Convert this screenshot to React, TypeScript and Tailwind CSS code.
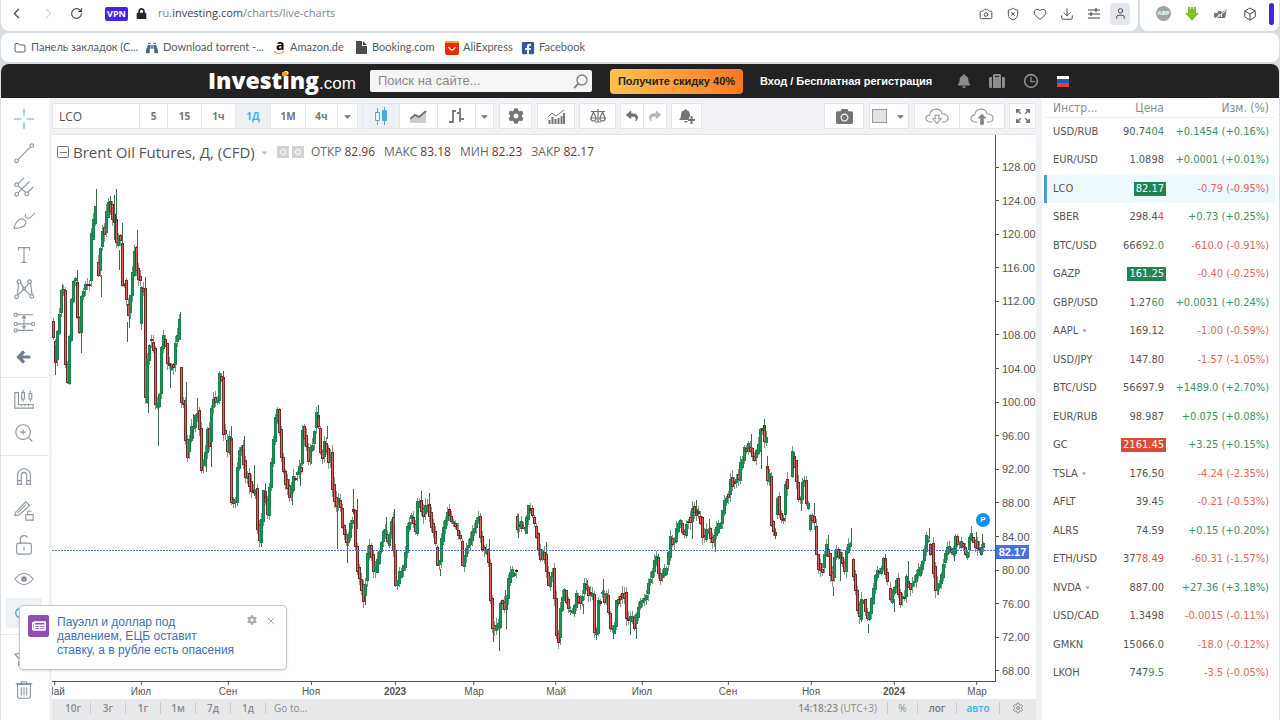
import React from 'react';
import { ChevronLeft, ChevronRight, RotateCw, Camera, ShieldX, Heart, Download, User, Box, Folder, X, Settings } from 'lucide-react';
import { FaLock, FaBell, FaSuitcase, FaCamera, FaReply, FaShare, FaCog, FaBinoculars, FaFacebookSquare, FaNewspaper, FaCaretDown } from 'react-icons/fa';

type Point = [number, number];

// Price path of the instrument, split where the session gaps
const RUNS: Point[][] = [
  [[53, 322], [55, 340], [57, 360], [59, 335], [60, 318], [62, 311], [63, 292], [65, 293], [66, 353], [68, 380], [70, 388], [71, 340], [72, 333], [73, 303], [75, 280], [77, 282], [79, 320], [81, 332], [82, 303], [84, 292], [88, 283], [91, 282], [92, 257], [93, 238], [95, 222], [96, 210]],
  [[98, 265], [101, 275], [102, 248], [103, 220], [105, 237], [107, 228], [109, 203], [110, 203], [113, 210], [114, 215], [116, 220], [118, 245], [120, 237], [122, 242], [123, 292], [125, 282], [127, 282], [128, 303], [129, 322], [131, 303], [133, 285], [134, 275], [135, 250], [137, 250], [138, 267], [140, 277]],
  [[141, 322], [142, 303], [143, 287], [145, 288], [146, 377], [147, 400], [149, 360], [151, 342], [153, 342], [155, 347], [156, 407], [158, 408], [160, 405], [161, 393], [163, 348], [165, 340], [167, 343], [170, 373], [172, 363], [175, 363], [177, 342], [179, 340], [180, 317]],
  [[181, 368], [183, 402], [185, 403], [186, 427], [188, 453], [190, 455], [192, 430], [194, 432], [197, 417], [198, 405], [200, 420], [202, 443], [203, 467], [206, 463], [208, 440], [209, 430], [211, 443], [213, 407], [216, 395], [218, 413], [221, 377], [223, 377], [224, 417], [225, 432]],
  [[227, 442], [228, 467], [230, 440], [232, 440], [233, 502], [237, 503], [238, 480], [241, 450], [244, 448], [246, 478], [250, 473], [252, 495], [258, 490], [259, 527], [261, 545], [263, 520], [265, 493], [267, 502], [269, 515], [272, 477], [274, 453], [277, 420], [279, 412], [281, 433], [283, 460], [287, 482], [292, 497], [294, 483], [297, 477], [301, 470]],
  [[302, 462], [304, 428], [307, 443], [311, 463], [313, 440], [315, 447], [317, 413], [319, 417], [321, 440], [323, 463], [327, 437], [329, 462], [332, 453], [334, 487], [337, 507], [341, 498], [343, 523], [347, 540], [349, 548], [350, 537], [352, 523]],
  [[353, 512], [356, 513], [357, 547], [359, 570], [363, 588], [365, 598], [367, 583], [369, 557], [372, 543], [374, 567], [377, 573], [380, 560], [383, 543], [386, 528], [390, 550], [392, 520], [394, 520], [396, 587], [399, 583], [403, 570], [406, 567], [408, 537], [410, 523], [413, 517], [417, 533], [419, 507], [422, 500], [424, 517], [429, 505], [432, 522], [436, 540], [440, 572], [442, 547], [445, 527], [449, 513], [453, 523], [457, 527]],
  [[458, 532], [462, 543], [464, 565], [467, 550], [471, 542], [475, 530], [480, 517], [482, 540], [486, 553], [489, 550], [491, 577], [493, 623], [497, 630], [500, 627], [502, 602], [507, 610], [509, 583], [512, 577], [516, 572]],
  [[517, 520], [518, 528], [523, 527], [527, 533], [528, 523], [531, 508], [535, 517], [539, 537], [542, 560], [546, 550], [548, 563], [550, 588], [555, 570], [557, 600], [559, 633], [562, 642], [563, 613], [567, 592], [570, 607], [574, 617], [577, 607], [579, 597], [583, 603], [588, 583], [592, 597], [596, 593], [597, 633], [599, 635], [601, 603]],
  [[603, 592], [607, 600], [609, 597], [611, 613], [614, 637], [617, 627], [619, 603], [623, 597], [628, 595], [629, 618], [635, 620], [636, 633], [638, 620], [643, 603], [648, 597], [652, 582], [656, 567], [659, 557], [662, 582], [667, 573], [670, 563], [673, 540], [677, 543], [680, 527], [684, 522], [686, 543], [690, 517], [693, 523], [695, 507], [698, 513], [703, 520], [706, 542], [710, 530], [716, 543], [718, 533], [722, 527], [725, 513], [728, 497], [731, 495], [732, 478], [736, 487], [738, 478], [741, 480], [742, 468], [746, 460], [747, 450], [752, 447], [755, 460], [759, 455], [761, 450], [763, 430], [765, 428], [767, 443]],
  [[768, 467], [770, 480], [772, 478], [773, 520], [776, 535]],
  [[778, 515], [780, 500], [783, 523], [786, 517], [787, 478], [789, 488]],
  [[793, 475], [795, 457], [798, 467], [800, 500], [803, 500], [804, 483], [807, 483], [809, 507]],
  [[811, 528], [814, 512], [817, 527], [819, 555], [822, 573], [826, 570], [828, 547], [832, 557], [834, 590], [837, 560], [838, 550], [842, 557], [847, 570], [850, 547], [852, 545]],
  [[854, 563], [857, 583], [859, 600], [862, 620], [863, 607], [867, 600], [869, 627], [872, 613], [875, 597], [877, 583], [879, 573], [883, 577], [886, 560], [889, 583]],
  [[891, 590], [893, 603], [897, 587], [899, 582], [902, 602], [907, 597], [908, 580], [913, 587], [916, 582], [919, 577], [922, 572], [925, 563], [927, 550], [930, 535], [932, 553]],
  [[934, 547], [936, 570], [938, 590], [943, 583], [945, 570], [948, 553], [952, 550], [955, 557], [958, 540], [962, 548], [964, 543], [968, 557], [971, 547], [973, 538], [977, 543], [982, 553], [985, 546]],
];

// Long shadows: x, top, bottom
const WICKS: [number, number, number][] = [
  [55, 345, 375], [62, 284, 312], [77, 270, 285], [81, 330, 353], [96, 189, 212], [101, 275, 297], [110, 196, 205], [116, 189, 222], [114, 195, 240], [119, 250, 270], [122, 223, 245],
  [127, 322, 342], [137, 230, 252], [129, 300, 328], [145, 277, 290], [148, 395, 414], [158, 405, 447], [170, 370, 388], [180, 312, 320], [186, 382, 405], [193, 415, 440], [197, 398, 410],
  [206, 460, 473], [211, 430, 468], [223, 371, 380], [231, 427, 442], [244, 437, 450], [254, 466, 497], [261, 540, 548], [265, 484, 500], [292, 490, 506], [300, 464, 487], [318, 405, 420],
  [311, 455, 465], [327, 427, 440], [337, 505, 550], [347, 535, 564], [353, 490, 515], [357, 500, 530], [365, 595, 606], [386, 518, 530], [394, 510, 525], [421, 492, 503], [429, 494, 508],
  [440, 570, 577], [449, 511, 516], [465, 560, 567], [489, 540, 553], [493, 620, 643], [499, 627, 652], [506, 608, 630], [505, 591, 602], [518, 515, 539], [547, 543, 556], [561, 640, 643],
  [584, 605, 615], [588, 581, 590], [597, 630, 641], [604, 580, 600], [614, 630, 640], [631, 618, 636], [637, 628, 640], [659, 555, 560], [693, 515, 540], [697, 501, 515], [710, 520, 534],
  [716, 540, 553], [752, 435, 450], [765, 420, 432], [762, 445, 470], [768, 457, 470], [776, 530, 540], [795, 453, 460], [802, 495, 512], [815, 504, 515], [829, 536, 550], [834, 588, 597],
  [841, 555, 582], [852, 529, 547], [862, 615, 623], [869, 625, 634], [886, 555, 562], [895, 600, 613], [909, 562, 585], [930, 529, 540], [939, 588, 596], [955, 555, 562], [977, 533, 545], [983, 535, 553],
];

const noise = (n: number) => {
  const v = Math.sin(n * 12.9898) * 43758.5453;
  return v - Math.floor(v);
};

const priceAt = (run: Point[], x: number) => {
  for (let i = 1; i < run.length; i++) {
    const [x0, y0] = run[i - 1];
    const [x1, y1] = run[i];
    if (x <= x1) return y0 + ((y1 - y0) * (x - x0)) / (x1 - x0);
  }
  return run[run.length - 1][1];
};

const CANDLES = RUNS.flatMap((run) => {
  const out: { x: number; top: number; bottom: number; high: number; low: number; up: boolean }[] = [];
  const end = run[run.length - 1][0];
  for (let x = run[0][0]; x < end + 1; x += 2) {
    const open = priceAt(run, x) + (noise(x) - 0.5) * 5;
    const close = priceAt(run, Math.min(x + 2, end)) + (noise(x + 7) - 0.5) * 8;
    const top = Math.round(Math.min(open, close)) - 1;
    const bottom = Math.round(Math.max(open, close)) + 1;
    out.push({
      x,
      top,
      bottom,
      high: top - Math.round(noise(x + 3) * 7),
      low: bottom + Math.round(noise(x + 5) * 7),
      up: close < open,
    });
  }
  return out;
});

const PRICES = Array.from({ length: 16 }, (_, i) => (128 - i * 4).toFixed(2));

const MONTHS: [string, number][] = [
  ['Май', 55], ['Июл', 141], ['Сен', 228], ['Ноя', 311], ['2023', 395], ['Мар', 474],
  ['Май', 556], ['Июл', 642], ['Сен', 728], ['Ноя', 811], ['2024', 894], ['Мар', 977],
];

interface Quote {
  name: string;
  price: string;
  tail?: string;
  tone?: 'up' | 'down';
  filled?: boolean;
  change: string;
  dot?: boolean;
}

const QUOTES: Quote[] = [
  { name: 'USD/RUB', price: '90.7', tail: '404', tone: 'up', change: '+0.1454 (+0.16%)' },
  { name: 'EUR/USD', price: '1.0898', change: '+0.0001 (+0.01%)' },
  { name: 'LCO', price: '82.17', tone: 'up', filled: true, change: '-0.79 (-0.95%)' },
  { name: 'SBER', price: '298.4', tail: '4', tone: 'down', change: '+0.73 (+0.25%)' },
  { name: 'BTC/USD', price: '666', tail: '92.0', tone: 'up', change: '-610.0 (-0.91%)' },
  { name: 'GAZP', price: '161.25', tone: 'up', filled: true, change: '-0.40 (-0.25%)' },
  { name: 'GBP/USD', price: '1.27', tail: '60', tone: 'up', change: '+0.0031 (+0.24%)' },
  { name: 'AAPL', price: '169.12', change: '-1.00 (-0.59%)', dot: true },
  { name: 'USD/JPY', price: '147.80', change: '-1.57 (-1.05%)' },
  { name: 'BTC/USD', price: '56697.9', change: '+1489.0 (+2.70%)' },
  { name: 'EUR/RUB', price: '98.987', change: '+0.075 (+0.08%)' },
  { name: 'GC', price: '2161.45', tone: 'down', filled: true, change: '+3.25 (+0.15%)' },
  { name: 'TSLA', price: '176.50', change: '-4.24 (-2.35%)', dot: true },
  { name: 'AFLT', price: '39.4', tail: '5', tone: 'up', change: '-0.21 (-0.53%)' },
  { name: 'ALRS', price: '74.59', change: '+0.15 (+0.20%)' },
  { name: 'ETH/USD', price: '37', tail: '78.49', tone: 'down', change: '-60.31 (-1.57%)' },
  { name: 'NVDA', price: '887.00', change: '+27.36 (+3.18%)', dot: true },
  { name: 'USD/CAD', price: '1.3498', change: '-0.0015 (-0.11%)' },
  { name: 'GMKN', price: '15066.0', change: '-18.0 (-0.12%)' },
  { name: 'LKOH', price: '747', tail: '9.5', tone: 'up', change: '-3.5 (-0.05%)' },
];

const Icon = ({ children, size = 24 }: { children: React.ReactNode; size?: number }) => (
  <svg width={size} height={size} viewBox="0 0 24 24" fill="none" stroke="currentColor" strokeWidth="1.2" aria-hidden="true">
    {children}
  </svg>
);

const BrowserBar = () => (
  <div className="flex gap-[2px] h-[31px] text-[#3d444d]">
    <div className="flex flex-1 items-center bg-white rounded-b-lg pl-[5px] pr-2 pb-1">
      <button aria-label="Назад" className="w-5 flex justify-center"><ChevronLeft size={17} strokeWidth={1.5} /></button>
      <button aria-label="Вперёд" className="w-5 ml-3 flex justify-center text-gray-300"><ChevronRight size={17} strokeWidth={1.5} /></button>
      <button aria-label="Обновить" className="w-5 ml-2 flex justify-center"><RotateCw size={13} strokeWidth={2} /></button>
      <span className="ml-[19px] w-[23px] rounded-[2px] bg-[#4423e8] text-white text-[9px] leading-[14px] font-bold text-center">VPN</span>
      <FaLock size={11} className="ml-2 text-[#20262e]" />
      <span className="ml-[11px] text-[11px] text-[#7d858f]">ru.<span className="text-[#3a4048]">investing.com</span>/charts/live-charts</span>
      <div className="ml-auto flex items-center">
        {[Camera, ShieldX, Heart, Download].map((Glyph, i) => (
          <button key={i} aria-label="Инструмент" className="w-[27px] flex justify-center"><Glyph size={14} strokeWidth={1.6} /></button>
        ))}
        <button aria-label="Меню" className="w-[27px] flex justify-center">
          <svg width="12" height="12" viewBox="0 0 12 12" fill="none" stroke="currentColor" strokeWidth="1.200"><path d="M0 2h12M0 6h12M0 10h12M8 0v4M3 4v4" /></svg>
        </button>
        <button aria-label="Профиль" className="w-5 h-[22px] ml-[3px] rounded bg-[#e3e7ec] flex items-center justify-center"><User size={13} strokeWidth={1.8} /></button>
      </div>
    </div>
    <div className="flex items-center gap-[14px] bg-white rounded-b-lg pl-4 pr-[5px] pb-1">
      <span className="w-[15px] h-[15px] rounded-full bg-[#a2a2a2] text-white text-[6px] leading-[15px] text-center font-bold">ABP</span>
      <svg width="14" height="15" viewBox="0 0 14 15" fill="#7fc01e"><path d="M3 1h2v2h1V1h2v2h1V1h2v6h3l-7 7.500L0 7h3z" /></svg>
      <svg width="16" height="12" viewBox="0 0 16 12" fill="#777"><path d="M1 9Q0 4 4 5Q6 1 9 4L14 1L12 10H3z" /><path d="M3 10L15 1M6 6v3M8.500 6v3" stroke="#fff" strokeWidth="1" /></svg>
      <Box size={14} strokeWidth={1.7} />
      <span className="w-[5px] h-[22px] rounded bg-[#4423e8] ml-[-2px]" />
    </div>
  </div>
);

const Bookmarks = () => (
  <nav className="mt-[2px] h-[29px] bg-white rounded-lg flex items-center pl-[13px] text-[11px] text-[#555c64] font-['Lato','Open_Sans',sans-serif]">
    <a href="#panel" className="w-[132px] flex items-center gap-[5px] whitespace-nowrap"><Folder size={12} />Панель закладок (С...</a>
    <a href="#torrent" className="w-[128px] flex items-center gap-[5px] whitespace-nowrap"><FaBinoculars size={12} className="text-[#426684]" />Download torrent -...</a>
    <a href="#amazon" className="w-[82px] flex items-center gap-[5px]">
      <span className="relative w-[11px] h-[14px]">
        <b className="absolute -top-[3px] left-[2px] text-[14px] leading-[14px] text-black font-['Open_Sans',sans-serif]">a</b>
        <svg className="absolute bottom-0 left-0" width="11" height="4" viewBox="0 0 11 4" fill="none" stroke="#f59a23" strokeWidth="1.200"><path d="M0 .500q5 4 10 0" /></svg>
      </span>
      Amazon.de
    </a>
    <a href="#booking" className="w-[89px] flex items-center gap-[5px]">
      <svg width="11" height="13" viewBox="0 0 11 13" fill="#4c4c4c"><path d="M0 0h6v5h5v8H0z" /><path d="M7 0l4 4H7z" /></svg>
      Booking.com
    </a>
    <a href="#ali" className="w-[76px] flex items-center gap-1">
      <svg width="14" height="14" viewBox="0 0 14 14"><rect width="14" height="14" rx="2" fill="#e62e04" /><path d="M0 2q0-2 2-2h10q2 0 2 2z" fill="#f6a623" /><path d="M3.500 6q3.500 6 7 0" stroke="#fff" fill="none" strokeWidth="1.300" /></svg>
      AliExpress
    </a>
    <a href="#fb" className="flex items-center gap-1"><FaFacebookSquare size={14} className="text-[#3556a5]" />Facebook</a>
  </nav>
);

const SiteHeader = () => (
  <header className="mt-[2px] h-[34px] bg-[#222] rounded-t-lg flex items-center pl-[207px] text-white font-['Liberation_Sans',sans-serif]">
    <a href="#home" className="w-[162px] flex items-baseline whitespace-nowrap leading-none pb-[2px]">
      <span className="relative font-['Open_Sans',sans-serif] font-extrabold text-[23px]">
        Investing
        <span className="absolute left-[74px] top-[3px] w-[5px] h-[4px] bg-[#f7a01c]" />
      </span>
      <span className="text-[17px]">.com</span>
    </a>
    <label className="w-[222px] h-[22px] flex items-center rounded-[2px] bg-[#f5f5f5] pl-2 pr-1">
      <input aria-label="Поиск" placeholder="Поиск на сайте..." className="flex-1 min-w-0 text-[13px] bg-transparent placeholder:text-[#8a8a8a]" />
      <svg width="15" height="15" viewBox="0 0 15 15" fill="none" stroke="#858585" strokeWidth="1.500"><circle cx="9" cy="6" r="5" /><path d="M5.500 9.500L1 14" strokeWidth="2" /></svg>
    </label>
    <button className="ml-[18px] w-[133px] h-[25px] rounded bg-linear-to-r from-[#fdc251] to-[#fb7722] text-[#222] text-[11px] font-bold">Получите скидку 40%</button>
    <a href="#login" className="ml-[17px] text-[11px] font-bold whitespace-nowrap">Вход / Бесплатная регистрация</a>
    <div className="ml-[25px] flex items-center gap-[18px] text-[#8d8d8d]">
      <FaBell size={14} />
      <FaSuitcase size={16} />
      <Icon size={16}><circle cx="12" cy="12" r="9.500" strokeWidth="2.500" /><path d="M12 6v7h6" strokeWidth="2" /></Icon>
      <span className="w-3 h-[11px] flex flex-col"><i className="flex-1 bg-white" /><i className="flex-1 bg-[#2259b5]" /><i className="flex-1 bg-[#e04040]" /></span>
    </div>
  </header>
);

const Tool = ({ label, active, className, children }: { label: string; active?: boolean; className: string; children: React.ReactNode }) => (
  <button aria-label={label} className={`h-[26px] flex items-center justify-center border border-[#e3e5ea] -ml-px ${active ? 'bg-[#edf1f5] text-[#4aaedb]' : 'bg-white'} ${className}`}>
    {children}
  </button>
);

const ChartToolbar = () => (
  <div className="h-[36px] pt-[5px] pl-[3px] pr-[6px] flex text-[#757575] text-[10px] font-bold font-['Open_Sans',sans-serif]">
    <input aria-label="Инструмент" defaultValue="LCO" className="w-[88px] h-[26px] pl-[6px] bg-white border border-[#e3e5ea] text-xs font-normal text-[#555]" />
    <Tool label="5" className="w-[29px]">5</Tool>
    <Tool label="15" className="w-[35px]">15</Tool>
    <Tool label="1ч" className="w-[35px]">1ч</Tool>
    <Tool label="1Д" active className="w-[36px]">1Д</Tool>
    <Tool label="1М" className="w-[36px]">1М</Tool>
    <Tool label="4ч" className="w-[33px]">4ч</Tool>
    <Tool label="Интервалы" className="w-[21px]"><FaCaretDown size={11} /></Tool>
    <div className="flex ml-[5px]">
      <Tool label="Свечи" active className="w-[38px]">
        <svg width="14" height="18" viewBox="0 0 14 18" fill="none" stroke="currentColor"><path d="M3.500 1v4M3.500 14v4M10.500 0v3M10.500 14v4" /><path d="M1.500 5.500h4v8h-4z" /><path d="M8.500 3.500h4v10h-4z" fill="currentColor" /></svg>
      </Tool>
      <Tool label="Область" className="w-[39px]">
        <svg width="17" height="13" viewBox="0 0 17 13"><path d="M0 10l5-4 3 2 8-7v12H0z" fill="#ccc" /><path d="M0 9l5-4 4 2 7-6" fill="none" stroke="currentColor" strokeWidth="2" /></svg>
      </Tool>
      <Tool label="Бары" className="w-[39px]">
        <svg width="16" height="16" viewBox="0 0 16 16" fill="none" stroke="currentColor" strokeWidth="1.800"><path d="M4 2v13M0 14h4M4 3h3M11 0v14M8 5h3M11 11h4" /></svg>
      </Tool>
      <Tool label="Типы графика" className="w-[19px]"><FaCaretDown size={11} /></Tool>
    </div>
    <div className="ml-[6px]"><Tool label="Настройки" className="w-[33px]"><FaCog size={16} /></Tool></div>
    <div className="ml-[6px]">
      <Tool label="Индикаторы" className="w-[38px]">
        <svg width="17" height="15" viewBox="0 0 17 15" fill="none" stroke="currentColor"><path d="M1.500 15v-4M4.500 15V8M7.500 15v-5M10.500 15V9M13.500 15V7M16 15V4" strokeWidth="2" /><path d="M0 8l4-4 4 3 4-3 4-3" /></svg>
      </Tool>
    </div>
    <div className="ml-[5px]">
      <Tool label="Сравнить" className="w-[37px]">
        <svg width="16" height="14" viewBox="0 0 16 14" fill="none" stroke="currentColor" strokeWidth="1.200"><path d="M1 2.500h14M8 0v13M5 13h6M3.500 3L1 9M3.500 3L6 9M12.500 3L10 9M12.500 3L15 9M.500 9h6q-1 3-3 3t-3-3zM9.500 9h6q-1 3-3 3t-3-3z" /></svg>
      </Tool>
    </div>
    <div className="flex ml-[5px]">
      <Tool label="Отменить" className="w-[24px]"><FaReply size={12} /></Tool>
      <Tool label="Повторить" className="w-[24px] text-[#b5b8bd]"><FaShare size={12} /></Tool>
    </div>
    <div className="ml-[5px]">
      <Tool label="Оповещение" className="w-[31px]">
        <svg width="16" height="15" viewBox="0 0 16 15" fill="currentColor"><path d="M6.500 0q1 0 1 1.200Q11 2 11 6v2h-1v3H0q2-1.500 2-5 0-4 3.500-4.800Q5.500 0 6.500 0zM5 12h4q-2 3-4 0z" /><path d="M12.500 7v8M9 11h7" stroke="currentColor" strokeWidth="2" /></svg>
      </Tool>
    </div>
    <div className="ml-auto flex"><Tool label="Снимок" className="w-[40px]"><FaCamera size={17} /></Tool></div>
    <div className="ml-[6px]">
      <Tool label="Макет" className="w-[40px] gap-2"><span className="w-[15px] h-[14px] bg-[#e3e3e3] border border-[#999]" /><FaCaretDown size={11} /></Tool>
    </div>
    <div className="flex ml-[6px]">
      {[false, true].map((up) => (
        <Tool key={String(up)} label={up ? 'Сохранить' : 'Загрузить'} className="w-[46px]">
          <svg width="24" height="17" viewBox="0 0 26 18" fill="none" stroke="#9a9a9a" strokeWidth="1.200">
            <path d="M8 15H5Q1 14 1 11 1 8 5 7.500 6 1 12 1q5 0 6.500 5Q25 6.500 25 11q0 3-4 4h-3" />
            {up ? <path d="M13 6l5 5h-3v7h-4v-7H8z" fill="#858585" stroke="none" /> : <path d="M11 7.500h4v4h2.500L13 16.500 8.500 11.500H11z" />}
          </svg>
        </Tool>
      ))}
    </div>
    <div className="ml-[5px]">
      <Tool label="Во весь экран" className="w-[27px]">
        <svg width="16" height="16" viewBox="0 0 18 18" fill="none" stroke="currentColor" strokeWidth="1.800"><path d="M2 6V2h4M2 2l4.500 4.500M12 2h4v4M16 2l-4.500 4.500M2 12v4h4M2 16l4.500-4.500M16 12v4h-4M16 16l-4.500-4.500" /></svg>
      </Tool>
    </div>
  </div>
);

const DRAW_TOOLS: [string, React.ReactNode][] = [
  ['Перекрестие', <g stroke="#4aaee0"><path d="M12 1v7M12 16v7M1 12h8M15 12h8" /></g>],
  ['Линия', <><path d="M5.500 19L19 5.500" /><circle cx="4" cy="20.500" r="2" /><circle cx="20.500" cy="4" r="2" /></>],
  ['Вилы', <><path d="M5.500 8.500L12 2M5.500 18.500L18 6M16 18L22 12M6 11l8 7" /><circle cx="4" cy="9.500" r="2" /><circle cx="4" cy="20" r="2" /><circle cx="15" cy="19.500" r="2" /></>],
  ['Кисть', <path d="M1 20Q4 10 9 9.500q5 .500 5 4.500-1 6-13 6zM14 4q-2 5 3 5 3-1 7-6" />],
  ['Текст', <path d="M6 7V4h12v3M12 4v16M9.500 20h5" />],
  ['Фигуры', <><path d="M5 19L6 5M8 5l4 6M13 11l5-6M19 5l2 14M5 19l7-7 7 7" /><circle cx="6.500" cy="4" r="2" /><circle cx="18" cy="4" r="2" /><circle cx="4" cy="20.500" r="2" /><circle cx="20.500" cy="20" r="2" /><circle cx="12" cy="11.500" r="1.500" /></>],
  ['Прогноз', <><path d="M4 3h18M4 13h17M4 20h18M12 5v12M10 7l2-3 2 3M10 15l2 3 2-3" /><circle cx="3" cy="3" r="1.800" /><circle cx="3" cy="13" r="1.800" /><circle cx="22" cy="13" r="1.800" /><circle cx="3" cy="20" r="1.800" /></>],
  ['Назад', <path d="M12 6l-6 6 6 6M6 12h13" strokeWidth="3.500" stroke="#71818e" />],
];

const MEASURE_TOOLS: [string, React.ReactNode][] = [
  ['Измерить', <><path d="M2 5v17h20v-4H6V5zM9 18v2M13 18v2M17 18v2M11 2v3M11 12v3M19 3v3M19 12v3" /><path d="M9.500 5h3v7h-3zM17.500 6h3v6h-3z" /></>],
  ['Увеличить', <><circle cx="11" cy="11" r="8" /><path d="M17 17l4 4M11 8v6M8 11h6" /></>],
];

const LOCK_TOOLS: [string, React.ReactNode][] = [
  ['Магнит', <><path d="M5 20V11q0-8 7-8t7 8v9h-4v-9q0-4-3-4t-3 4v9zM5 16h4M15 16h4" /></>],
  ['Рисование', <><path d="M2 17l1-4L14 2l4 4L7 16zM5 14l9-9" /><path d="M14 16h8v6h-8zM16 16v-3q2-2 4 0" /></>],
  ['Замок', <><rect x="4" y="10" width="16" height="12" rx="2" /><path d="M8 10V5q1-4 6-3l2 2M12 14v4" /></>],
  ['Показать', <><path d="M2 12Q12 0 22 12 12 24 2 12z" /><circle cx="12" cy="12" r="2.500" fill="currentColor" /></>],
];

const ToolGroup = ({ tools }: { tools: [string, React.ReactNode][] }) => (
  <>
    {tools.map(([label, drawing]) => (
      <button key={label} aria-label={label} className="h-[34px] pr-[2px] flex items-center justify-center"><Icon size={22}>{drawing}</Icon></button>
    ))}
  </>
);

const DrawingTools = () => (
  <aside className="w-[48px] shrink-0 bg-white pt-1 flex flex-col text-[#8a95a0]">
    <ToolGroup tools={DRAW_TOOLS} />
    <hr className="mt-[3px] mb-1 border-[#e4e7eb]" />
    <ToolGroup tools={MEASURE_TOOLS} />
    <hr className="mt-[5px] mb-1 border-[#e4e7eb]" />
    <ToolGroup tools={LOCK_TOOLS} />
    <button aria-label="Связь" className="h-[30px] ml-[5px] mr-[7px] my-[2px] bg-[#edf2f4] text-[#4aaedb] flex items-center justify-center"><Icon size={20}><path d="M9 6q-7 1-7 6t7 6M15 4q4-1 5 2" strokeWidth="1.600" /></Icon></button>
    <hr className="my-1 border-[#e4e7eb]" />
    <ToolGroup
      tools={[
        ['Избранное', <path d="M12 3l3 6 7 1-5 5 1 7-6-3-6 3 1-7-5-5 7-1z" />],
        ['Удалить', <><path d="M5 6h14v13q0 2-2 2H7q-2 0-2-2zM3 5h18M9 5V3h6v2" /><path d="M9 9v9M12 9v9M15 9v9" /></>],
      ]}
    />
  </aside>
);

const Legend = () => (
  <div className="absolute top-[6px] left-[5px] flex items-center text-[#555] whitespace-nowrap font-['Open_Sans',sans-serif]">
    <button aria-label="Свернуть" className="w-3 h-3 border border-[#777] rounded-[2px] flex items-center justify-center"><span className="w-[7px] h-px bg-[#777]" /></button>
    <span className="ml-1 w-[187px] text-[15px]">Brent Oil Futures, Д, (CFD)</span>
    <FaCaretDown size={9} className="text-[#bbb]" />
    <span className="ml-2 w-3 h-3 bg-[#d2d2d2] flex items-center justify-center"><i className="w-[6px] h-[6px] rounded-full border border-white" /></span>
    <span className="ml-[3px] w-3 h-3 bg-[#d2d2d2] flex items-center justify-center"><i className="w-[6px] h-[6px] rounded-full border border-white" /></span>
    <div className="ml-[7px] flex gap-[9px] text-xs text-[#666]">
      {[['ОТКР', '82.96'], ['МАКС', '83.18'], ['МИН', '82.23'], ['ЗАКР', '82.17']].map(([k, v]) => (
        <span key={k}>{k}<span className="ml-[3px] text-[#6f3434]">{v}</span></span>
      ))}
    </div>
  </div>
);

const Chart = () => (
  <div className="flex-1 min-h-0 ml-[3px] mr-[6px] bg-white border-t border-[#dfe2e6] grid grid-cols-[1fr_40px] grid-rows-[1fr_17px] font-['Liberation_Sans',sans-serif] text-[11px] text-[#555]">
    <div className="relative min-h-0 border-r border-b border-[#555]">
      <svg className="absolute inset-0 w-full h-full" viewBox="52 135 944 547" preserveAspectRatio="none" shapeRendering="crispEdges">
        {CANDLES.map((c, i) => (
          <g key={i}>
            <rect x={c.x} y={c.high} width="1" height={c.low - c.high} fill={c.up ? '#6f9c7c' : '#8d9688'} />
            <rect x={c.x - 1} y={c.top} width="3" height={c.bottom - c.top} fill={c.up ? '#17834f' : '#6e2b27'} />
            {c.bottom - c.top > 3 && <rect x={c.x} y={c.top + 1} width="1" height={c.bottom - c.top - 2} fill={c.up ? '#1a9459' : '#e0605a'} />}
          </g>
        ))}
        {WICKS.map(([x, top, bottom]) => (
          <rect key={`${x}-${top}`} x={x} y={top} width="1" height={bottom - top} fill="#3f6a4c" />
        ))}
        <path d="M52 551.500H996" stroke="#5874c0" strokeDasharray="2 1" />
      </svg>
      <Legend />
      <span className="absolute right-[5px] top-[378px] w-[14px] h-[14px] rounded-full bg-[#1290f0] text-white text-[8px] leading-[14px] font-bold text-center">P</span>
    </div>
    <div className="relative min-h-0 flex flex-col justify-between pt-[25px] pb-[4px] text-[11px] leading-[14px]">
      {PRICES.map((p) => (
        <span key={p} className="flex items-center gap-[3px]"><i className="w-[3px] h-px bg-[#555]" />{p}</span>
      ))}
      <span className="absolute left-0 top-[410px] w-[33px] h-[14px] bg-[#4b6fe0] text-white font-bold text-center">82.17</span>
    </div>
    <div className="relative overflow-hidden leading-[14px] text-[10px]">
      {MONTHS.map(([m, x]) => (
        <span key={x} className="absolute top-0 -translate-x-1/2 flex flex-col items-center" style={{ left: `${((x - 52) / 944) * 100}%` }}>
          <i className="w-px h-[3px] bg-[#555]" />
          <span className={m.startsWith('20') ? 'font-bold' : ''}>{m}</span>
        </span>
      ))}
    </div>
    <div />
  </div>
);

const RangeBar = () => (
  <div className="h-[21px] ml-[3px] mr-[6px] pb-[3px] bg-[#e7e8ea] flex items-center text-[10px] text-[#8b8b8b] font-['Open_Sans',sans-serif]">
    <div className="flex pl-1">
      {['10г', '3г', '1г', '1м', '7д', '1д'].map((r) => (
        <button key={r} className="w-[35px] border-r border-[#ccc] leading-[12px] font-semibold">{r}</button>
      ))}
      <button className="ml-2 leading-[12px]">Go to...</button>
    </div>
    <div className="ml-auto flex items-center leading-[12px]">
      <span className="pr-[10px]"><b className="font-semibold">14:18:23</b> (UTC+3)</span>
      <button className="w-[31px] border-x border-[#ccc]">%</button>
      <button className="w-[39px] border-r border-[#ccc] text-[#777] font-semibold">лог</button>
      <button className="w-[43px] border-r border-[#ccc] text-[#3bb2e0] font-semibold">авто</button>
      <button aria-label="Настройки" className="w-[36px] flex justify-center"><Settings size={12} /></button>
    </div>
  </div>
);

const toneText = { up: 'text-[#3d8f66]', down: 'text-[#e05040]' };

const Watchlist = () => (
  <section className="w-[237px] shrink-0 bg-white pt-px pb-[32px] pl-[2px] pr-[4px] text-[11px] text-[#555] font-['DejaVu_Sans_Condensed','Open_Sans',sans-serif]">
    <table className="w-full h-full border-collapse">
      <thead className="text-[#8a8a8a] text-xs">
        <tr className="h-[18px] border-b border-[#eee]">
          <th className="font-normal text-left pl-[9px] leading-[16px]">Инстр...</th>
          <th className="font-normal text-right leading-[16px]">Цена</th>
          <th className="font-normal text-right pr-[6px] leading-[16px]">Изм. (%)</th>
        </tr>
      </thead>
      <tbody>
        {QUOTES.map((q, i) => (
          <tr key={i} className={q.name === 'LCO' ? 'bg-[#edf8fd] shadow-[inset_3px_0_0_#4aa0cc]' : ''}>
            <td className="w-[66px] pl-[9px] whitespace-nowrap">{q.name}{q.dot && <span className="text-[#aaa]"> •</span>}</td>
            <td className="w-[54px] text-right">
              {q.filled ? (
                <span className={`inline-block px-[2px] leading-[14px] -mr-[2px] text-white ${q.tone === 'up' ? 'bg-[#1f8451]' : 'bg-[#dc4a33]'}`}>{q.price}</span>
              ) : (
                <>{q.price}<span className={q.tone ? toneText[q.tone] : ''}>{q.tail}</span></>
              )}
            </td>
            <td className={`text-right pr-[6px] whitespace-nowrap ${q.change.startsWith('+') ? 'text-[#3d8f66]' : 'text-[#dd6658]'}`}>{q.change}</td>
          </tr>
        ))}
      </tbody>
    </table>
  </section>
);

const NewsToast = () => (
  <div className="absolute left-[19px] bottom-[50px] w-[268px] h-[65px] bg-white border border-[#c9c9c9] rounded shadow flex pt-[9px] pl-[8px] pr-[9px] font-['Liberation_Sans',sans-serif]">
    <span className="w-[22px] h-[22px] rounded-[2px] bg-[#8e4fae] text-white flex items-center justify-center"><FaNewspaper size={14} /></span>
    <a href="#news" className="ml-2 w-[190px] shrink-0 text-xs leading-[14px] text-[#3f6fb0]">Пауэлл и доллар под<br />давлением, ЕЦБ оставит<br />ставку, а в рубле есть опасения</a>
    <div className="ml-auto flex items-start gap-2 text-[#aaa]">
      <button aria-label="Настройки"><FaCog size={10} /></button>
      <button aria-label="Закрыть"><X size={12} strokeWidth={2} /></button>
    </div>
  </div>
);

export default function App() {
  return (
    <div className="relative h-screen min-h-[720px] min-w-[1200px] flex flex-col overflow-hidden bg-[#d5dde5] px-px font-['Open_Sans',sans-serif]">
      <BrowserBar />
      <Bookmarks />
      <SiteHeader />
      <main className="flex-1 min-h-0 flex bg-[#f0f2f6]">
        <DrawingTools />
        <div className="flex-1 min-w-0 flex flex-col">
          <ChartToolbar />
          <Chart />
          <RangeBar />
        </div>
        <Watchlist />
      </main>
      <NewsToast />
    </div>
  );
}
